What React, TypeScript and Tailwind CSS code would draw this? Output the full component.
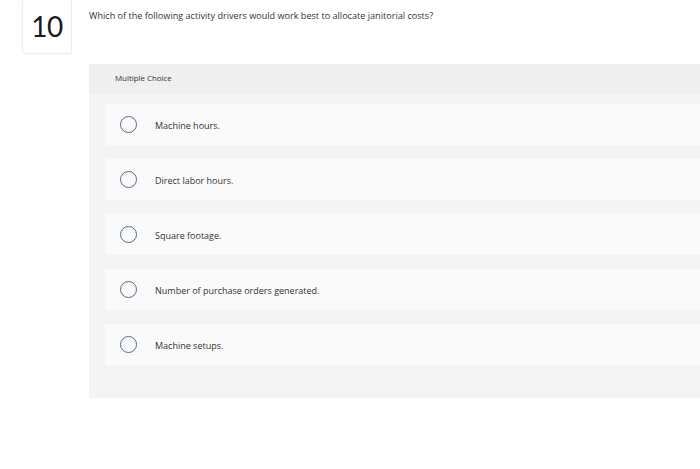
import React from "react";

const options = [
  "Machine hours.",
  "Direct labor hours.",
  "Square footage.",
  "Number of purchase orders generated.",
  "Machine setups.",
];

export default function App() {
  return (
    <div
      className="w-[700px] h-[469px] bg-white overflow-hidden relative"
      style={{ fontFamily: '"Open Sans", "Liberation Sans", sans-serif' }}
    >
      <div className="flex">
        <div className="ml-[22px] -mt-[2px] w-[50px] h-[56px] border border-[#ececec] rounded-[3px] shadow-[0_1px_2px_rgba(0,0,0,0.04)] flex items-center justify-center">
          <span className="text-[28px] font-normal text-[#1a1a1a] leading-none tracking-[-0.5px]" style={{ fontFamily: 'Lato, "Open Sans", sans-serif' }}>10</span>
        </div>
        <div className="ml-[17px] mt-[10px] text-[9.1px] text-[#333] leading-[12px]">
          Which of the following activity drivers would work best to allocate janitorial costs?
        </div>
      </div>
      <div className="ml-[89px] mt-[10px] h-[334px] bg-[#f4f4f4]">
        <div className="h-[30px] bg-[#efefef] flex items-center pl-[26px] text-[7.9px] text-[#333]">
          Multiple Choice
        </div>
        <div className="pl-[16px] pt-[10px] flex flex-col gap-[14px]">
          {options.map((o) => (
            <div key={o} className="h-[41px] bg-[#fafafa] flex items-center">
              <div className="ml-[15px] w-[17px] h-[17px] rounded-full border-[1.3px] border-[#4f6c8c]" />
              <span className="ml-[18px] mt-[2px] text-[9px] text-[#333]">{o}</span>
            </div>
          ))}
        </div>
      </div>
    </div>
  );
}
